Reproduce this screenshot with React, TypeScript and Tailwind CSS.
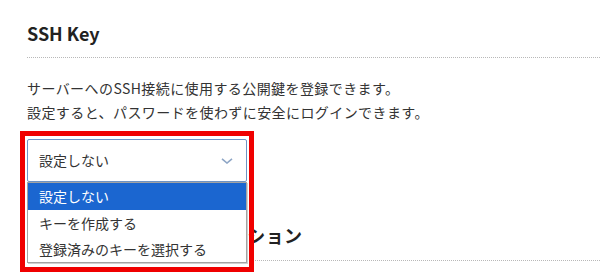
import React from "react";

export default function App() {
  return (
    <div
      className="relative w-[600px] h-[279px] overflow-hidden bg-white text-[#333]"
      style={{ fontFamily: '"Noto Sans CJK JP", "Noto Sans", sans-serif' }}
    >
      <div className="pl-[27px]">
        <h2 className="pt-[22px] text-[18px] leading-[22px] font-bold text-[#222]">SSH Key</h2>
        <div className="mt-[13px] border-t border-dotted border-[#b8b8b8]" />
        <p className="mt-[18px] text-[14px] leading-[24px] tracking-[0.03em]">
          サーバーへのSSH接続に使用する公開鍵を登録できます。
          <br />
          設定すると、パスワードを使わずに安全にログインできます。
        </p>

        <div className="relative mt-[15px] w-[220px]">
          <div className="flex h-[43px] items-center justify-between rounded-[2px] border border-[#6f93c4] bg-white pl-[11px] pr-[13px] text-[14px]">
            <span>設定しない</span>
            <svg width="12" height="6" viewBox="0 0 12 6" fill="none">
              <path d="M1 0.8 L6 5 L11 0.8" stroke="#8ea6c6" strokeWidth="1.6" />
            </svg>
          </div>
          <div className="absolute left-0 top-[43px] z-10 w-[220px] border border-[#a3a3a3] bg-white text-[14px] shadow-[1px_1px_0_#d0d0d0]">
            <div className="flex h-[27px] items-center bg-[#1b66d0] pl-[11px] text-white">設定しない</div>
            <div className="flex h-[26px] items-center pl-[11px]">キーを作成する</div>
            <div className="flex h-[26px] items-center pl-[11px]">登録済みのキーを選択する</div>
          </div>
          <div className="pointer-events-none absolute left-[-7px] top-[-8px] z-20 h-[141px] w-[234px] border-[5px] border-[#f00000]" />
        </div>

        <h2 className="mt-[42px] text-[18px] leading-[22px] font-bold text-[#222] tracking-[0.02em]">
          公開鍵認証のログインオプション
        </h2>
        <div className="mt-[14px] border-t border-dotted border-[#b8b8b8]" />
      </div>
    </div>
  );
}
